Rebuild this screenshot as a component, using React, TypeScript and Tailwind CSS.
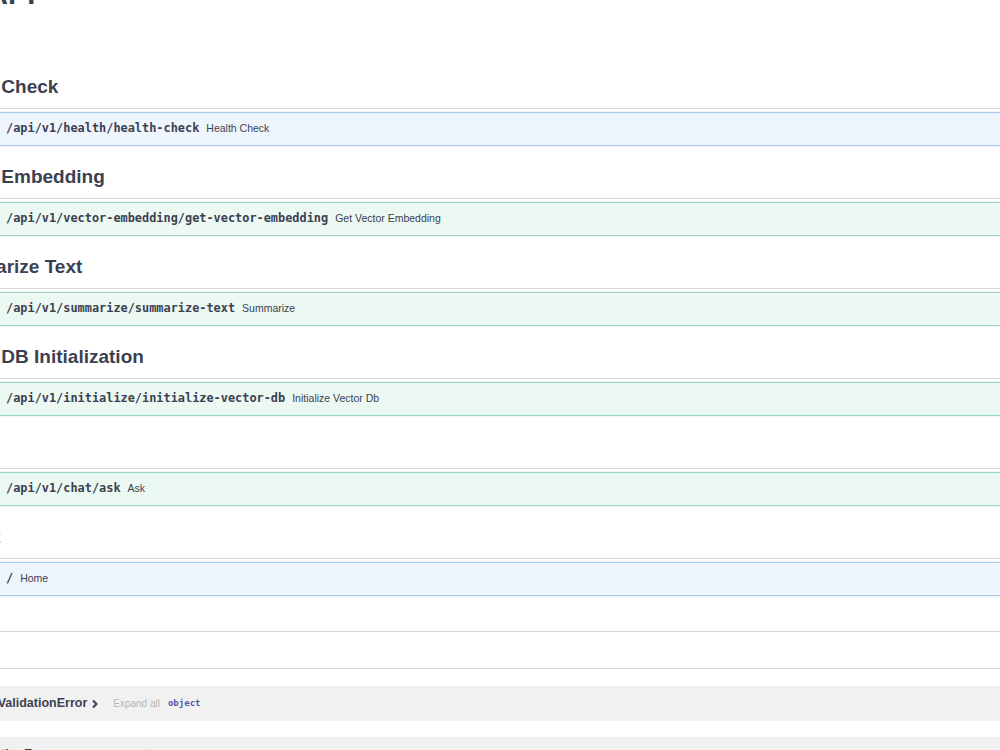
type Op = { method: "GET" | "POST"; path: string; summary: string };
type Tag = { name: string; op: Op };

const tags: Tag[] = [
  { name: "Health Check", op: { method: "GET", path: "/api/v1/health/health-check", summary: "Health Check" } },
  { name: "Vector Embedding", op: { method: "POST", path: "/api/v1/vector-embedding/get-vector-embedding", summary: "Get Vector Embedding" } },
  { name: "Summarize Text", op: { method: "POST", path: "/api/v1/summarize/summarize-text", summary: "Summarize" } },
  { name: "Vector DB Initialization", op: { method: "POST", path: "/api/v1/initialize/initialize-vector-db", summary: "Initialize Vector Db" } },
  { name: "Chat", op: { method: "POST", path: "/api/v1/chat/ask", summary: "Ask" } },
  { name: "default", op: { method: "GET", path: "/", summary: "Home" } },
];

function OpBlock({ op }: { op: Op }) {
  const isGet = op.method === "GET";
  return (
    <div
      className={
        isGet
          ? "ml-[37px] mt-[3px] mb-[10px] h-[34px] flex items-center px-[4px] rounded border border-[#a6cbf2] bg-[#eef5fd] shadow-[0_0_3px_rgba(0,0,0,0.12)]"
          : "ml-[37px] mt-[3px] mb-[10px] h-[34px] flex items-center px-[4px] rounded border border-[#98d7bd] bg-[#ecf8f2] shadow-[0_0_3px_rgba(0,0,0,0.12)]"
      }
    >
      <span
        className={
          isGet
            ? "w-[64px] h-[24px] shrink-0 rounded-[3px] bg-[#61affe] text-white text-[11px] font-bold flex items-center justify-center"
            : "w-[64px] h-[24px] shrink-0 rounded-[3px] bg-[#49cc90] text-white text-[11px] font-bold flex items-center justify-center"
        }
      >
        {op.method}
      </span>
      <span className="ml-[10px] font-['DejaVu_Sans_Mono',monospace] text-[11.9px] font-bold text-[#3b4151]">
        {op.path}
      </span>
      <span className="ml-[7px] text-[10.5px] text-[#3b4151]">{op.summary}</span>
    </div>
  );
}

function ModelRow({ name }: { name: string }) {
  return (
    <div className="ml-[16px] mb-[16px] h-[35px] rounded bg-[#f1f1f1] flex items-center pl-[21px]">
      <span className="text-[12.5px] font-bold text-[#3b4151]">{name}</span>
      <svg className="ml-[4px]" width="8" height="10" viewBox="0 0 8 10">
        <path d="M2 1.5l3.5 3.5L2 8.5" stroke="#3b4151" strokeWidth="2" fill="none" />
      </svg>
      <span className="ml-[14px] text-[10px] text-[#b5b5b5]">Expand all</span>
      <span className="ml-[8px] font-['DejaVu_Sans_Mono',monospace] text-[9px] font-bold text-[#5555aa]">
        object
      </span>
    </div>
  );
}

export default function App() {
  return (
    <div className="min-h-screen overflow-hidden bg-white font-['Liberation_Sans',Arial,sans-serif] text-[#3b4151]">
      <div className="-ml-[110px] w-[1300px] flex flex-col">
        <div className="h-[66px] flex flex-col">
          <h2 className="-mt-[20px] ml-[97px] text-[29px] leading-[29px] font-bold">API</h2>
        </div>

        {tags.map((t) => (
          <div key={t.name}>
            <div className="ml-[37px] h-[43px] border-b border-[#d6d7da] flex items-center pl-[11px]">
              <h3 className="text-[19px] font-bold">{t.name}</h3>
            </div>
            <OpBlock op={t.op} />
          </div>
        ))}

        <div className="ml-[37px] mt-[25px] rounded border border-[#d4d4d4]">
          <div className="h-[37px] border-b border-[#d9d9d9] flex items-center pl-[8px]">
            <h4 className="text-[13px] font-bold">Schemas</h4>
          </div>
          <div className="pt-[17px]">
            <ModelRow name="HTTPValidationError" />
            <ModelRow name="ValidationError" />
          </div>
        </div>
      </div>
    </div>
  );
}
